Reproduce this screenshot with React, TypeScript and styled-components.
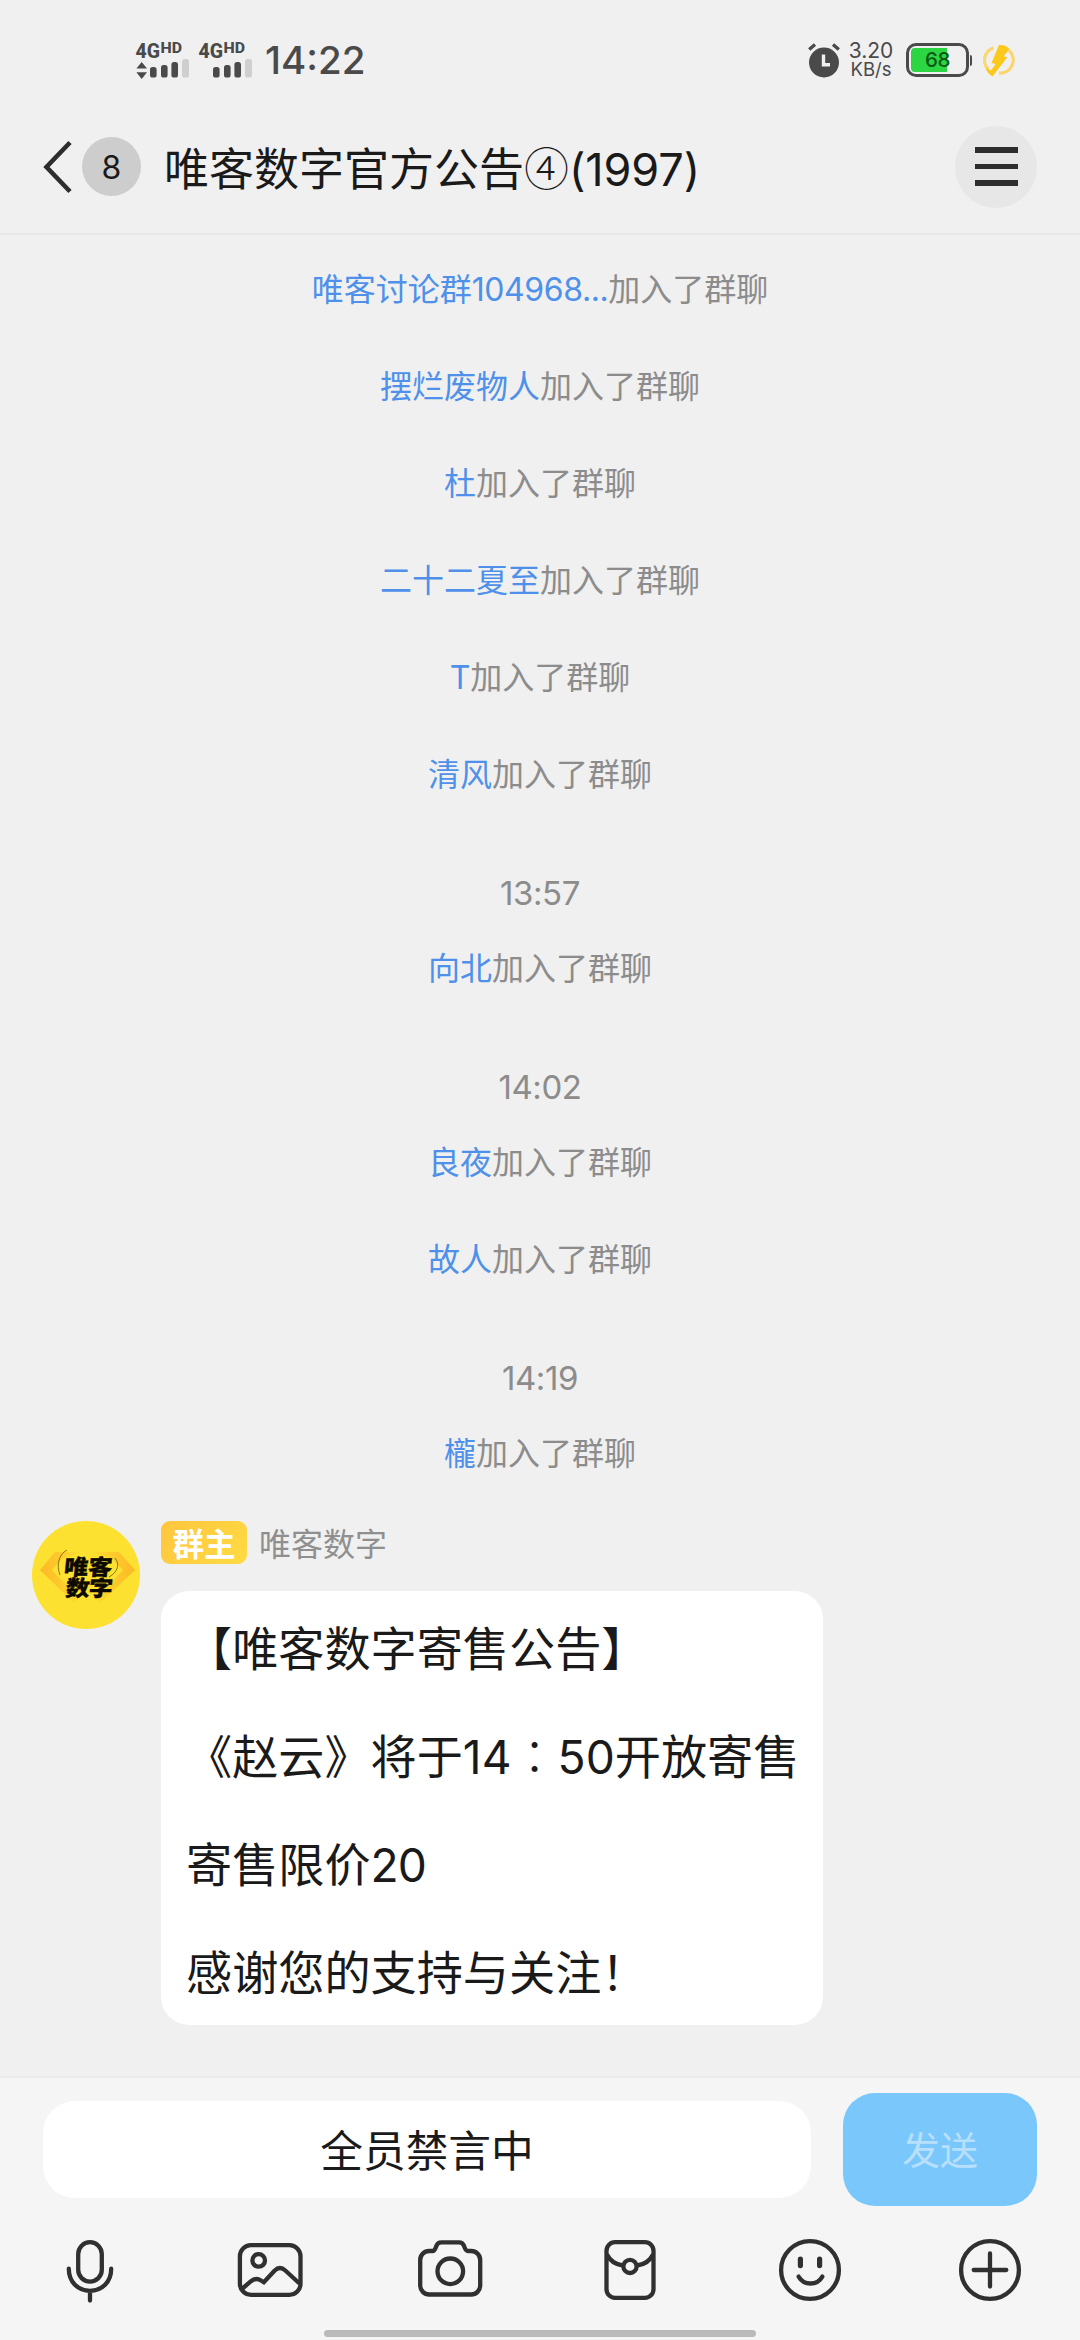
import React from 'react';
import styled, { createGlobalStyle } from 'styled-components';

const GlobalStyle = createGlobalStyle`
  * { box-sizing: border-box; }
  body {
    margin: 0;
    background: #f0f0f0;
    font-family: Inter, "Noto Sans CJK SC", sans-serif;
    color: #1a1a1a;
  }
`;

const Screen = styled.div`
  width: 1080px;
  height: 2340px;
  display: flex;
  flex-direction: column;
  background: #f0f0f0;
  overflow: hidden;
`;

/* ---------- status bar ---------- */

const StatusBar = styled.div`
  height: 100px;
  padding: 20px 65px 0 135px;
  display: flex;
  align-items: center;
  justify-content: space-between;
  color: #4a4a4a;
`;

const StatusGroup = styled.div`
  display: flex;
  align-items: center;
`;

const Clock = styled.span`
  margin-left: 4px;
  font-size: 38.5px;
  font-weight: 500;
  line-height: 40px;
`;

const NetSpeed = styled.div`
  width: 46px;
  margin: 0 12px 0 7px;
  display: flex;
  flex-direction: column;
  align-items: center;
`;

const NetLine = styled.span<{ $size: number }>`
  font-size: ${(p) => p.$size}px;
  line-height: 19.5px;
`;

const Signal = ({ arrows }: { arrows?: boolean }) => (
  <svg width="63" height="54" viewBox="0 -8 63 54" fill="#4a4a4a">
    <text x="0.5" y="16.5" fontFamily="Roboto, sans-serif" fontWeight="800" fontSize="20" textLength="24.5" lengthAdjust="spacingAndGlyphs">4G</text>
    <text x="25.6" y="11.8" fontFamily="Roboto, sans-serif" fontWeight="800" fontSize="14" textLength="21.5" lengthAdjust="spacingAndGlyphs">HD</text>
    {arrows && <path d="M6.7 21 12 27.5H1.4zM6.7 38 12 31.3H1.4z" />}
    <rect x="15" y="26" width="6.6" height="10.5" rx="2.6" />
    <rect x="26" y="24" width="6.6" height="12.5" rx="2.6" />
    <rect x="36.4" y="21" width="6.6" height="15.5" rx="2.6" />
    <rect x="47" y="18" width="7" height="18.5" rx="2.6" fill="#cfcfcf" />
  </svg>
);

const AlarmIcon = () => (
  <svg width="34" height="36" viewBox="0 0 34 36">
    <circle cx="17" cy="20.5" r="15" fill="#4a4a4a" />
    <path d="M2.2 7.5 8 2.5M31.8 7.5 26 2.5" stroke="#4a4a4a" strokeWidth="3.4" />
    <path d="M16.5 12.5v10.3H23" stroke="#f0f0f0" strokeWidth="3.4" fill="none" />
  </svg>
);

const Battery = styled.div`
  width: 63px;
  height: 34px;
  padding: 2px;
  border: 3px solid #4a4a4a;
  border-radius: 10px;
`;

const BatteryLevel = styled.div<{ $percent: number }>`
  height: 100%;
  border-radius: 4px 0 0 4px;
  background: linear-gradient(
    to right,
    #2bd642 ${(p) => p.$percent}%,
    transparent ${(p) => p.$percent}%
  );
  font-size: 20.5px;
  font-weight: 500;
  line-height: 23px;
  text-align: center;
  letter-spacing: -0.5px;
  color: #0b5a14;
`;

const BatteryCap = styled.span`
  width: 2px;
  height: 11px;
  margin: 0 11px 0 1px;
  border-radius: 0 2px 2px 0;
  background: #4a4a4a;
`;

const BoltIcon = () => (
  <svg width="32" height="34" viewBox="0 0 32 34">
    <path d="M10.5 4.8A13 13 0 0 0 5.5 26.5" fill="none" stroke="#f9d878" strokeWidth="3.4" />
    <path d="M26 7.5A13 13 0 0 1 16 30" fill="none" stroke="#fbd56a" strokeWidth="3.2" />
    <path d="M16 2Q23 1.5 26.5 6L20.5 13.5 24.5 14 9.5 33.5Q4 30 2.5 24.5L8 27.5 12.5 21 8.5 20z" fill="#fcc81c" />
  </svg>
);

/* ---------- chat header ---------- */

const Header = styled.header`
  height: 135px;
  padding: 0 43px 0 42px;
  display: flex;
  align-items: center;
  border-bottom: 2px solid #e6e6e6;
`;

const UnreadCount = styled.span`
  width: 59px;
  height: 59px;
  margin-left: 8px;
  border-radius: 50%;
  background: #cdcdcd;
  font-size: 32px;
  line-height: 61px;
  text-align: center;
`;

const Title = styled.h1`
  flex: 1;
  margin: 0 0 0 23px;
  padding-top: 6px;
  font-size: 45px;
  font-weight: 400;
  line-height: 60px;
  white-space: nowrap;
`;

const HanGlyph = styled.span<{ $light?: boolean }>`
  font-family: "Noto Sans CJK TC", sans-serif;
  font-weight: ${(p) => (p.$light ? 300 : 400)};
  line-height: 1;
`;

const Latin = styled.span<{ $tracking: number }>`
  letter-spacing: ${(p) => p.$tracking}px;
`;

const MenuButton = styled.button`
  width: 82px;
  height: 82px;
  padding: 0;
  border: 0;
  border-radius: 50%;
  background: #e7e7e7;
  display: flex;
  flex-direction: column;
  align-items: center;
  justify-content: center;
  gap: 11px;
`;

const MenuLine = styled.span`
  width: 43px;
  height: 5.5px;
  background: #2d2d2d;
`;

/* ---------- chat ---------- */

const Chat = styled.main`
  flex: 1;
  padding-top: 5px;
`;

const Notice = styled.p`
  height: 97px;
  margin: 0;
  font-size: 32px;
  line-height: 100px;
  text-align: center;
  color: #8c8c8c;
`;

const Name = styled.span`
  color: #4f90ea;
`;

const TimeStamp = styled.p`
  height: 97px;
  margin: 0;
  padding-top: 45px;
  font-size: 33px;
  line-height: 52px;
  text-align: center;
  letter-spacing: -0.4px;
  color: #8c8c8c;
`;

const Message = styled.article`
  margin-top: 20px;
  padding-left: 32px;
  display: flex;
  align-items: flex-start;
  gap: 21px;
`;

const MessageBody = styled.div`
  display: flex;
  flex-direction: column;
  align-items: flex-start;
`;

const Sender = styled.div`
  height: 43px;
  display: flex;
  align-items: center;
  gap: 12px;
  font-size: 32px;
  line-height: 43px;
  color: #8f8f8f;
`;

const SenderName = styled.span`
  padding-top: 4px;
`;

const OwnerTag = styled.span`
  width: 86px;
  height: 43px;
  border-radius: 9px;
  background: linear-gradient(135deg, #ffc53d, #ffdb45);
  font-size: 31.5px;
  font-weight: 700;
  line-height: 47px;
  text-align: center;
  color: #fff;
`;

const Bubble = styled.div`
  width: 662px;
  height: 434px;
  margin-top: 27px;
  padding: 4px 0 0 25px;
  border-radius: 28px;
  background: #fff;
`;

const BubbleLine = styled.p`
  height: 108px;
  margin: 0;
  font-size: 46.15px;
  line-height: 108px;
  white-space: nowrap;
`;

const Avatar = () => (
  <svg width="108" height="108" viewBox="0 0 108 108">
    <defs>
      <linearGradient id="wingL" x1="0" x2="1">
        <stop offset="0" stopColor="#fdb827" />
        <stop offset="1" stopColor="#fddf30" />
      </linearGradient>
      <linearGradient id="wingR" x1="1" x2="0">
        <stop offset="0" stopColor="#fdb827" />
        <stop offset="1" stopColor="#fddf30" />
      </linearGradient>
    </defs>
    <circle cx="54" cy="54" r="54" fill="#fde131" />
    <path d="M8 49 23 31H50L30 38 20 49 46 76 42 82z" fill="url(#wingL)" />
    <path d="M103 49 87 31H58L80 38 91 49 65 76 68 82z" fill="url(#wingR)" />
    <path d="M35 29C27 33 24 44 28 54M83 37C88 43 86 51 77 56" fill="none" stroke="#6b5a10" strokeWidth="0.8" />
    <g fontFamily="'Noto Sans CJK SC', sans-serif" fontWeight="900" fontSize="24" fill="#0d0a00" stroke="#0d0a00" strokeWidth="0.4">
      <text transform="translate(31.5 53.6) skewX(-6) scale(1 0.9)" textLength="48">唯客</text>
      <text transform="translate(33 75.4) skewX(-6) scale(1 0.9)" textLength="47">数字</text>
    </g>
  </svg>
);

/* ---------- composer ---------- */

const Composer = styled.footer`
  height: 264px;
  border-top: 2px solid #ebebeb;
  background: #f5f5f5;
  display: flex;
  flex-direction: column;
`;

const InputRow = styled.div`
  padding: 15px 43px 0;
  display: flex;
  align-items: center;
  justify-content: space-between;
`;

const MutedInput = styled.div`
  width: 768px;
  height: 97px;
  border-radius: 32px;
  background: #fff;
  font-size: 42.7px;
  line-height: 101px;
  text-align: center;
`;

const SendButton = styled.button`
  width: 194px;
  height: 113px;
  padding: 2px 0 0;
  border: 0;
  border-radius: 32px;
  background: #7ac7fb;
  font-family: inherit;
  font-size: 38px;
  line-height: 111px;
  color: #b8e0fc;
`;

const Tools = styled.nav`
  padding-top: 28px;
  display: grid;
  grid-template-columns: repeat(6, 180px);
  justify-items: center;
`;

const ToolSvg = styled.svg`
  width: 72px;
  height: 72px;
  fill: none;
  stroke: #303030;
  stroke-width: 4.3;
  stroke-linecap: round;
`;

const HomeIndicator = styled.div`
  width: 432px;
  height: 7px;
  margin: 24px auto 0;
  border-radius: 4px;
  background: #bababa;
`;

const joinEvents: Array<{ name?: React.ReactNode; time?: string }> = [
  { name: <>唯客讨论群<Latin $tracking={-0.4}>104968...</Latin></> },
  { name: '摆烂废物人' },
  { name: '杜' },
  { name: '二十二夏至' },
  { name: 'T' },
  { name: '清风' },
  { time: '13:57' },
  { name: '向北' },
  { time: '14:02' },
  { name: '良夜' },
  { name: '故人' },
  { time: '14:19' },
  { name: '櫳' },
];

export default function App() {
  return (
    <Screen>
      <GlobalStyle />
      <StatusBar>
        <StatusGroup>
          <Signal arrows />
          <Signal />
          <Clock>14:22</Clock>
        </StatusGroup>
        <StatusGroup>
          <AlarmIcon />
          <NetSpeed>
            <NetLine $size={21}>3.20</NetLine>
            <NetLine $size={18.5}>KB/s</NetLine>
          </NetSpeed>
          <Battery>
            <BatteryLevel $percent={68}>68</BatteryLevel>
          </Battery>
          <BatteryCap />
          <BoltIcon />
        </StatusGroup>
      </StatusBar>

      <Header>
        <svg width="32" height="56" viewBox="0 0 32 56" fill="none" stroke="#2d2d2d" strokeWidth="4.6">
          <path d="M28 3.5 4.5 28 28 52.5" />
        </svg>
        <UnreadCount>8</UnreadCount>
        <Title>
          唯客数字官方公告<HanGlyph $light>④</HanGlyph>
          <Latin $tracking={-0.1}>(1997)</Latin>
        </Title>
        <MenuButton>
          <MenuLine />
          <MenuLine />
          <MenuLine />
        </MenuButton>
      </Header>

      <Chat>
        {joinEvents.map((e, i) =>
          e.time ? (
            <TimeStamp key={i}>{e.time}</TimeStamp>
          ) : (
            <Notice key={i}>
              <Name>{e.name}</Name>加入了群聊
            </Notice>
          ),
        )}
        <Message>
          <Avatar />
          <MessageBody>
            <Sender>
              <OwnerTag>群主</OwnerTag>
              <SenderName>唯客数字</SenderName>
            </Sender>
            <Bubble>
              <BubbleLine>【唯客数字寄售公告】</BubbleLine>
              <BubbleLine>
                《赵云》将于<Latin $tracking={0}>14</Latin>
                <HanGlyph $light>：</HanGlyph>
                <Latin $tracking={0}>50</Latin>开放寄售
              </BubbleLine>
              <BubbleLine>
                寄售限价<Latin $tracking={-1}>20</Latin>
              </BubbleLine>
              <BubbleLine>感谢您的支持与关注！</BubbleLine>
            </Bubble>
          </MessageBody>
        </Message>
      </Chat>

      <Composer>
        <InputRow>
          <MutedInput>全员禁言中</MutedInput>
          <SendButton>发送</SendButton>
        </InputRow>
        <Tools>
          <ToolSvg viewBox="0 0 72 72">
            <rect x="24.2" y="8.2" width="23.6" height="39.4" rx="11.8" />
            <path d="M14.8 34.7C14.8 48 24 56.8 36 56.8S57.2 48 57.2 34.7M36 57.5V66.5" />
          </ToolSvg>
          <ToolSvg viewBox="0 0 72 72">
            <rect x="5.9" y="11.2" width="60.6" height="49.6" rx="11" />
            <circle cx="24.7" cy="26.4" r="6.3" />
            <path strokeLinecap="butt" d="M7.3 55.5 17 47.2Q22 43.2 27 46.5L29.8 48.2 40.5 36.8Q45.8 31.5 51.3 36.5L65.5 49.5" />
          </ToolSvg>
          <ToolSvg viewBox="0 0 72 72">
            <path d="M18.5 17H15.2A9 9 0 0 0 6.2 26V51.5A9 9 0 0 0 15.2 60.5H57.2A9 9 0 0 0 66.2 51.5V26A9 9 0 0 0 57.2 17H54C51.5 17 51.2 15 50.2 12.3 49.2 9.5 47.5 8.4 45 8.4H27.4C25 8.4 23.2 9.5 22.2 12.3 21.2 15 20.8 17 18.5 17z" />
            <circle cx="36.3" cy="37.3" r="12.8" />
          </ToolSvg>
          <ToolSvg viewBox="0 0 72 72">
            <rect x="12.5" y="8.2" width="47" height="55.6" rx="8.5" />
            <path strokeLinecap="butt" d="M13 20.5C16 27 22 30.5 29 31.5M59 20.5C56 27 50 30.5 43 31.5" />
            <circle cx="36" cy="32.4" r="6.6" />
          </ToolSvg>
          <ToolSvg viewBox="0 0 72 72">
            <circle cx="36" cy="36" r="28.9" />
            <path strokeWidth="5.2" d="M26.4 25V31.6M45.6 25V31.6" />
            <path d="M24.6 42.6C30 51.8 43 51.8 48.4 42.6" />
          </ToolSvg>
          <ToolSvg viewBox="0 0 72 72">
            <circle cx="36" cy="36" r="28.9" />
            <path d="M19.7 36H52.3M36 19.5V52.5" />
          </ToolSvg>
        </Tools>
        <HomeIndicator />
      </Composer>
    </Screen>
  );
}
